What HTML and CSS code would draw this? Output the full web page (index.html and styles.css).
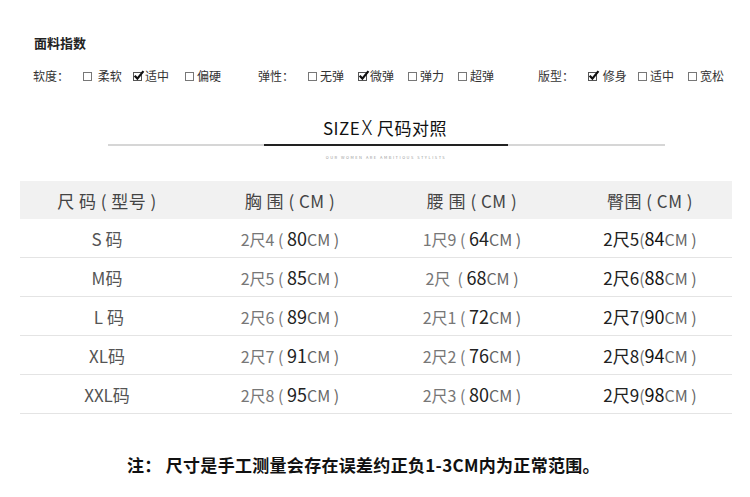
FILE: index.html
```html
<!DOCTYPE html>
<html lang="zh">
<head>
<meta charset="utf-8">
<link rel="stylesheet" href="styles.css">
</head>
<body>
<div class="page">
  <div class="title">面料指数</div>
  <div class="opts">
    <div class="grp g1">
      <span class="lbl">软度：</span>
      <span class="opt w50"><i class="box"></i>&nbsp;柔软</span>
      <span class="opt w52"><i class="box on"><svg viewBox="0 0 10 10"><path d="M1.5 5.2 L4 7.8 L9.5 1"/></svg></i>适中</span>
      <span class="opt"><i class="box"></i>偏硬</span>
    </div>
    <div class="grp g2">
      <span class="lbl">弹性：</span>
      <span class="opt w50"><i class="box"></i>无弹</span>
      <span class="opt w50"><i class="box on"><svg viewBox="0 0 10 10"><path d="M1.5 5.2 L4 7.8 L9.5 1"/></svg></i>微弹</span>
      <span class="opt w50"><i class="box"></i>弹力</span>
      <span class="opt"><i class="box"></i>超弹</span>
    </div>
    <div class="grp g3">
      <span class="lbl">版型：</span>
      <span class="opt w50"><i class="box on"><svg viewBox="0 0 10 10"><path d="M1.5 5.2 L4 7.8 L9.5 1"/></svg></i>&nbsp;修身</span>
      <span class="opt w50"><i class="box"></i>适中</span>
      <span class="opt"><i class="box"></i>宽松</span>
    </div>
  </div>

  <div class="heading">
    <div class="htext">SIZE<span class="x">X</span> 尺码对照</div>
    <div class="rule"><span class="dark"></span></div>
    <div class="tiny">OUR WOMEN ARE AMBITIOUS STYLISTS</div>
  </div>

  <div class="table">
    <div class="row head">
      <div class="c">尺 码 ( 型号 )</div>
      <div class="c">胸 围 ( CM )</div>
      <div class="c">腰 围 ( CM )</div>
      <div class="c c4">臀围 ( CM )</div>
    </div>
    <div class="row">
      <div class="c sz">S 码</div>
      <div class="c"><span class="lt">2尺4 ( </span><b>80</b><span class="cm">CM )</span></div>
      <div class="c"><span class="lt">1尺9 ( </span><b>64</b><span class="cm">CM )</span></div>
      <div class="c c4 dk"><span class="ch">2尺5</span><span class="lt">(</span><b>84</b><span class="cm">CM )</span></div>
    </div>
    <div class="row">
      <div class="c sz">M码</div>
      <div class="c"><span class="lt">2尺5 ( </span><b>85</b><span class="cm">CM )</span></div>
      <div class="c"><span class="lt">2尺 &nbsp;( </span><b>68</b><span class="cm">CM )</span></div>
      <div class="c c4 dk"><span class="ch">2尺6</span><span class="lt">(</span><b>88</b><span class="cm">CM )</span></div>
    </div>
    <div class="row">
      <div class="c sz">&nbsp;L 码</div>
      <div class="c"><span class="lt">2尺6 ( </span><b>89</b><span class="cm">CM )</span></div>
      <div class="c"><span class="lt">2尺1 ( </span><b>72</b><span class="cm">CM )</span></div>
      <div class="c c4 dk"><span class="ch">2尺7</span><span class="lt">(</span><b>90</b><span class="cm">CM )</span></div>
    </div>
    <div class="row">
      <div class="c sz">XL码</div>
      <div class="c"><span class="lt">2尺7 ( </span><b>91</b><span class="cm">CM )</span></div>
      <div class="c"><span class="lt">2尺2 ( </span><b>76</b><span class="cm">CM )</span></div>
      <div class="c c4 dk"><span class="ch">2尺8</span><span class="lt">(</span><b>94</b><span class="cm">CM )</span></div>
    </div>
    <div class="row">
      <div class="c sz">XXL码</div>
      <div class="c"><span class="lt">2尺8 ( </span><b>95</b><span class="cm">CM )</span></div>
      <div class="c"><span class="lt">2尺3 ( </span><b>80</b><span class="cm">CM )</span></div>
      <div class="c c4 dk"><span class="ch">2尺9</span><span class="lt">(</span><b>98</b><span class="cm">CM )</span></div>
    </div>
  </div>

  <div class="note">注： 尺寸是手工测量会存在误差约正负1-3CM内为正常范围。</div>
</div>
</body>
</html>
```

FILE: styles.css
```css
* { box-sizing: border-box; }
html, body {
  margin: 0;
  padding: 0;
  background: #fff;
}
body {
  font-family: "Noto Sans CJK SC", "Noto Sans", sans-serif;
  color: #333;
}
.page {
  width: 750px;
  height: 497px;
  padding-top: 34px;
  overflow: hidden;
}
.title {
  margin-left: 34px;
  font-size: 13px;
  line-height: 18px;
  font-weight: 700;
  color: #222;
}
.opts {
  display: flex;
  margin-top: 15px;
  margin-left: 33px;
  font-size: 12px;
  line-height: 18px;
  color: #333;
}
.grp { display: flex; align-items: center; }
.g1 { width: 225px; }
.g2 { width: 280px; }
.lbl { width: 50px; }
.opt { display: inline-flex; align-items: center; white-space: nowrap; }
.w50 { width: 50px; }
.w52 { width: 52px; }
.box {
  display: inline-block;
  width: 9px;
  height: 9px;
  border: 1px solid #777;
  margin-right: 3px;
  position: relative;
}
.box.on { border-color: #555; }
.box svg {
  position: absolute;
  left: -1px;
  top: -3px;
  width: 11px;
  height: 11px;
  overflow: visible;
}
.box svg path {
  fill: none;
  stroke: #111;
  stroke-width: 2;
}

.heading {
  margin-top: 30px;
  display: flex;
  flex-direction: column;
  align-items: center;
}
.htext {
  font-size: 17px;
  line-height: 24px;
  color: #111;
  letter-spacing: 0.5px;
  margin-left: 20px;
}
.htext .x {
  font-weight: 200;
  font-size: 20px;
  margin-left: 1px;
}
.rule {
  margin-top: 4px;
  width: 557px;
  height: 2px;
  background: #d6d6d6;
  display: flex;
  justify-content: center;
  margin-left: 22px;
}
.dark {
  width: 244px;
  height: 2px;
  background: #222;
}
.tiny {
  margin-top: 8px;
  font-size: 4px;
  line-height: 6px;
  letter-spacing: 1.5px;
  color: #999;
  margin-left: 22px;
}

.table {
  margin-top: 21px;
  margin-left: 20px;
  width: 712px;
}
.row {
  display: grid;
  grid-template-columns: 174px 192px 172px 174px;
  height: 39px;
  align-items: center;
  border-bottom: 1px solid #e4e4e4;
  font-size: 16px;
  color: #555;
}
.row.head {
  height: 38px;
  background: #f1f1f1;
  border-bottom: none;
  font-size: 17px;
  color: #444;
  letter-spacing: 0.5px;
}
.c { text-align: center; white-space: nowrap; }
.c4 { padding-left: 10px; }
.sz { color: #555; font-size: 17px; }
.lt { color: #777; font-size: 16px; }
.cm { color: #666; font-size: 16px; }
.ch { color: #222; font-size: 17px; }
.row b { font-weight: 400; color: #222; font-size: 18px; }
.dk b { color: #111; }
.note {
  margin-top: 41px;
  margin-left: 127px;
  font-size: 17px;
  line-height: 20px;
  font-weight: 700;
  color: #111;
  letter-spacing: 0.3px;
}
```
